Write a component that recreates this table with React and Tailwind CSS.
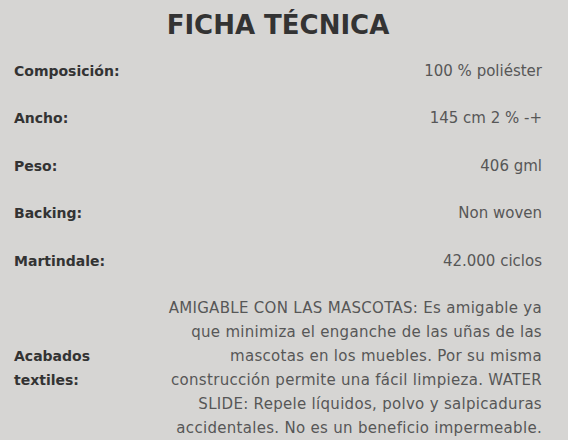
export default function App() {
  const rows = [
    ["Composición:", "100 % poliéster"],
    ["Ancho:", "145 cm 2 % -+"],
    ["Peso:", "406 gml"],
    ["Backing:", "Non woven"],
    ["Martindale:", "42.000 ciclos"],
  ];
  const lines = [
    "AMIGABLE CON LAS MASCOTAS: Es amigable ya",
    "que minimiza el enganche de las uñas de las",
    "mascotas en los muebles. Por su misma",
    "construcción permite una fácil limpieza. WATER",
    "SLIDE: Repele líquidos, polvo y salpicaduras",
    "accidentales. No es un beneficio impermeable.",
  ];
  return (
    <div className="w-[568px] h-[440px] overflow-hidden bg-[#d6d5d3] font-['DejaVu_Sans',sans-serif]">
      <div className="w-[528px] ml-[14px]">
        <h2 className="pt-[9px] pb-[6px] text-center text-[26px] leading-[32px] font-bold text-[#333333]">
          FICHA TÉCNICA
        </h2>
        {rows.map(([k, v]) => (
          <div key={k} className="flex items-center py-[11.75px] leading-6">
            <div className="w-[150px] text-[14px] font-bold text-[#333333]">{k}</div>
            <div className="flex-1 text-right text-[15px] text-[#575757]">{v}</div>
          </div>
        ))}
        <div className="flex items-center py-[11.75px] leading-6">
          <div className="w-[110px] text-[14px] font-bold text-[#333333]">Acabados textiles:</div>
          <div className="flex-1 text-right text-[15px] tracking-[0.3px] text-[#575757]">
            {lines.map((l) => (
              <div key={l} className="whitespace-nowrap">{l}</div>
            ))}
          </div>
        </div>
      </div>
    </div>
  );
}
